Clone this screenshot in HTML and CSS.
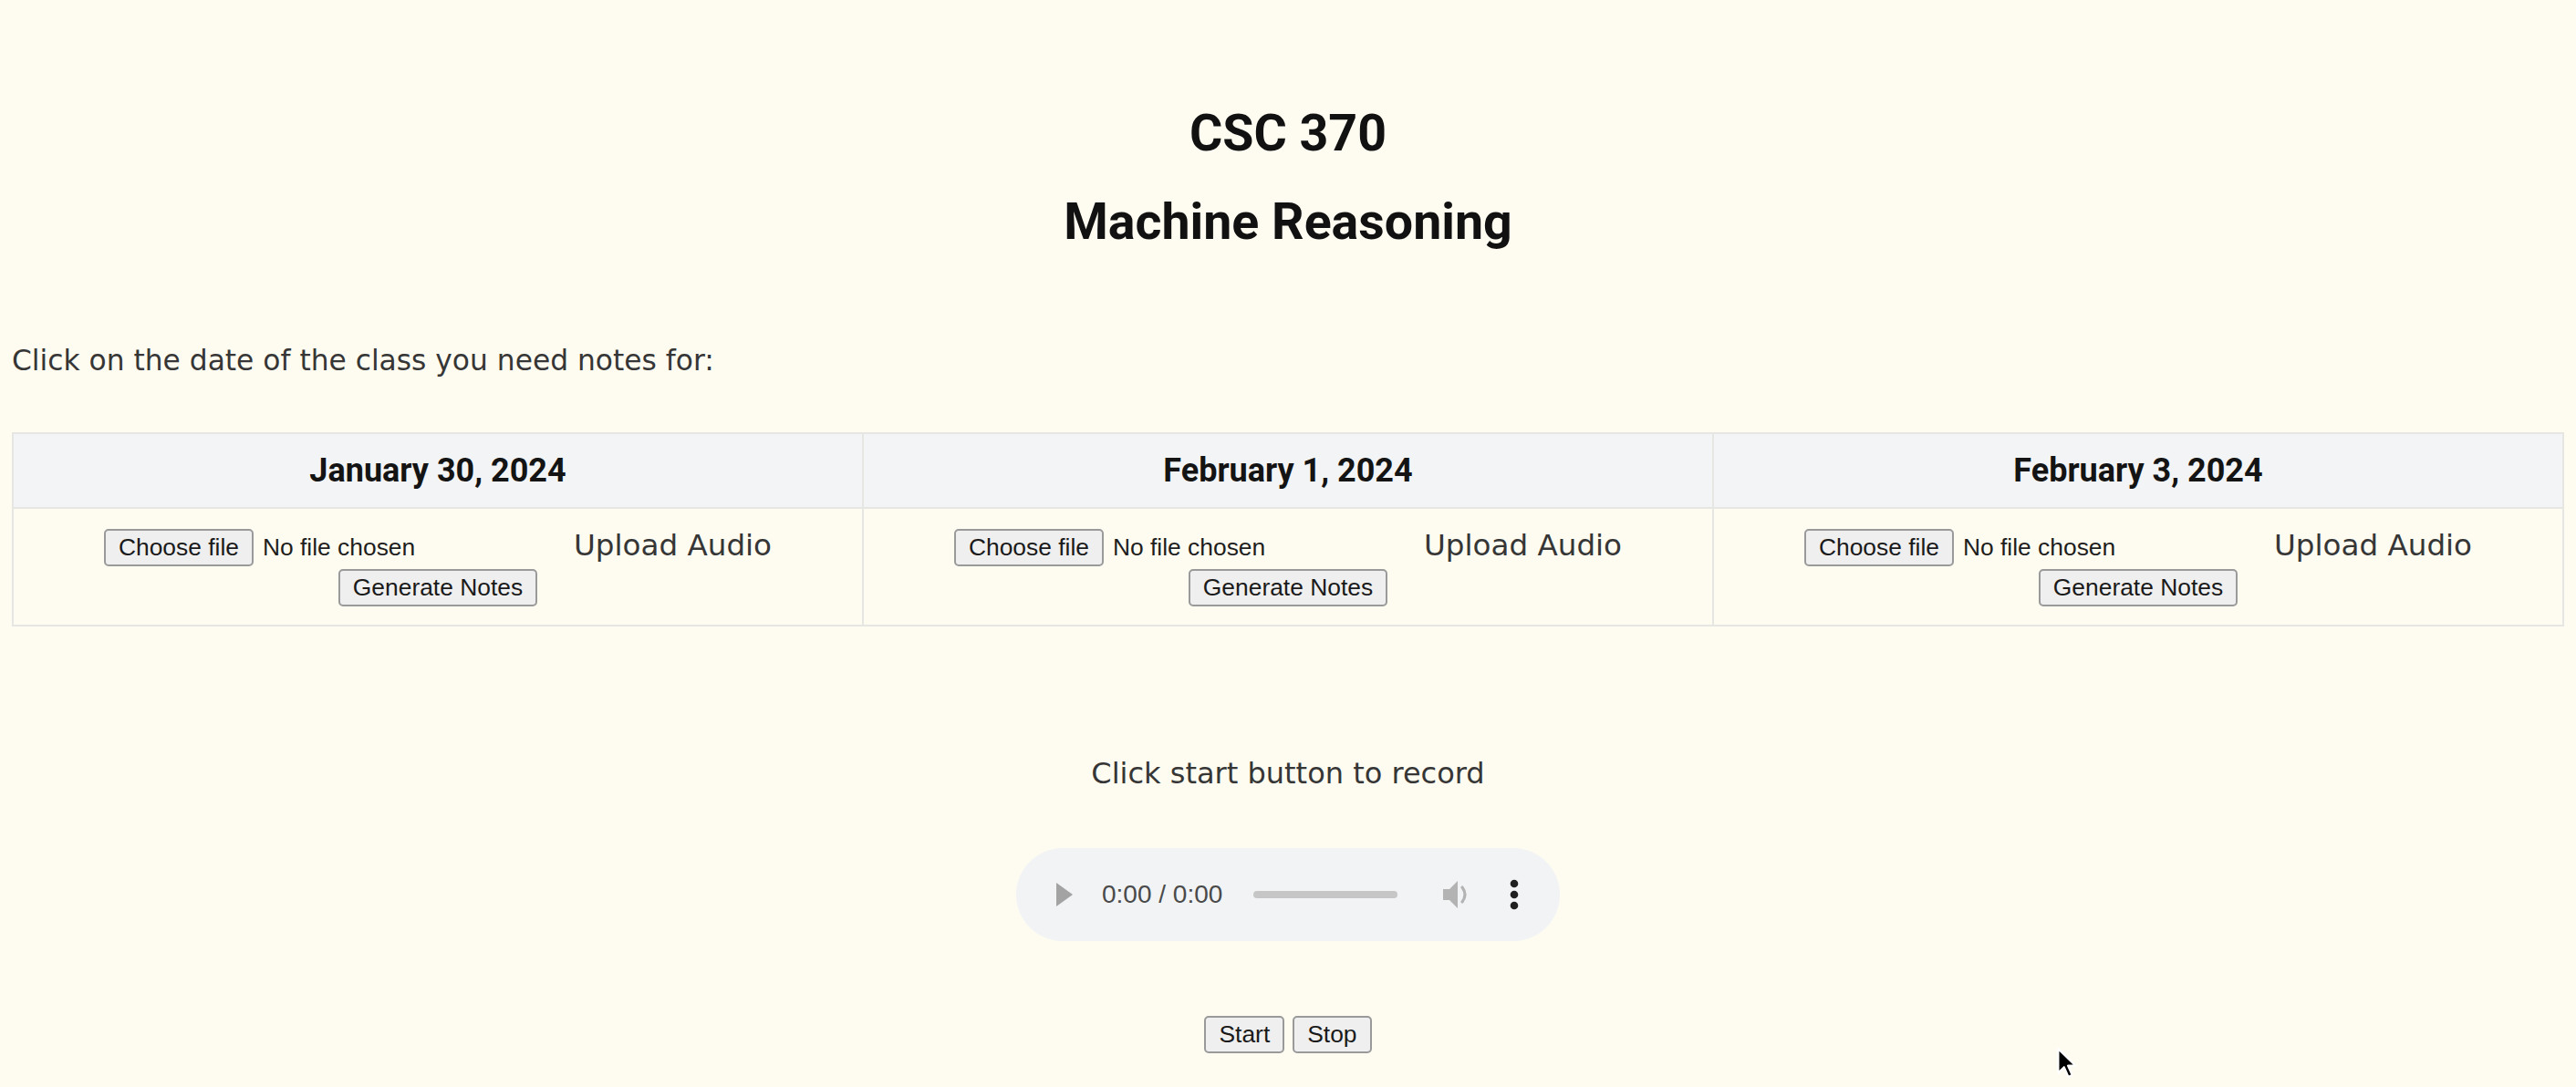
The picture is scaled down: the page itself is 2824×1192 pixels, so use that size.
FILE: index.html
```html
<!DOCTYPE html>
<html lang="en">
<head>
<meta charset="utf-8">
<title>CSC 370 - Machine Reasoning</title>
<link rel="stylesheet" href="styles.css">
</head>
<body>
<div class="page">
  <h1 class="title">CSC 370</h1>
  <h2 class="title sub">Machine Reasoning</h2>
  <p class="intro">Click on the date of the class you need notes for:</p>
  <table class="classes">
    <thead>
      <tr>
        <th>January 30, 2024</th>
        <th>February 1, 2024</th>
        <th>February 3, 2024</th>
      </tr>
    </thead>
    <tbody>
      <tr>
        <td>
          <div class="cell">
            <div class="upload-row">
              <span class="file"><span class="btn">Choose file</span><span class="file-name">No file chosen</span></span>
              <span class="upload-label">Upload Audio</span>
            </div>
            <span class="btn">Generate Notes</span>
          </div>
        </td>
        <td>
          <div class="cell">
            <div class="upload-row">
              <span class="file"><span class="btn">Choose file</span><span class="file-name">No file chosen</span></span>
              <span class="upload-label">Upload Audio</span>
            </div>
            <span class="btn">Generate Notes</span>
          </div>
        </td>
        <td>
          <div class="cell">
            <div class="upload-row">
              <span class="file"><span class="btn">Choose file</span><span class="file-name">No file chosen</span></span>
              <span class="upload-label">Upload Audio</span>
            </div>
            <span class="btn">Generate Notes</span>
          </div>
        </td>
      </tr>
    </tbody>
  </table>

  <p class="record-hint">Click start button to record</p>

  <div class="player-wrap">
    <div class="player">
      <svg class="play" width="18" height="26" viewBox="0 0 18 26"><polygon points="0,0 18,13 0,26" fill="#a3a3a3"/></svg>
      <span class="time">0:00 / 0:00</span>
      <span class="track"></span>
      <svg class="volume" width="32" height="36" viewBox="0 0 32 36"><path d="M1 12 H8 L17 3 V33 L8 24 H1 Z" fill="#b3b3b3"/><path d="M22 10 Q28 18 22 26" fill="none" stroke="#b3b3b3" stroke-width="3.2" stroke-linecap="round"/></svg>
      <svg class="menu" width="10" height="34" viewBox="0 0 10 34"><circle cx="5" cy="5" r="4.3" fill="#202020"/><circle cx="5" cy="17" r="4.3" fill="#202020"/><circle cx="5" cy="29" r="4.3" fill="#202020"/></svg>
    </div>
  </div>

  <div class="controls">
    <span class="btn">Start</span>
    <span class="btn">Stop</span>
  </div>
</div>
<svg class="cursor" width="26" height="36" viewBox="0 0 24 34"><path d="M2 2 L2 27 L8 21 L12.5 31 L16.5 29.3 L12 19.5 L20 19.5 Z" fill="#000" stroke="#fff" stroke-width="2" stroke-linejoin="round"/></svg>
</body>
</html>
```
FILE: styles.css
```css
html, body {
  margin: 0;
  padding: 0;
  background: #fefcf1;
}

body {
  font-family: "DejaVu Sans", "Open Sans", sans-serif;
  color: #363636;
  position: relative;
  min-height: 1192px;
  overflow: hidden;
}

.page {
  padding: 0 13px;
}

.title {
  font-family: Roboto, "Liberation Sans", sans-serif;
  font-weight: 700;
  font-size: 55.5px;
  line-height: 66px;
  color: #111;
  text-align: center;
  margin: 114px 0 0;
}

.title.sub {
  margin-top: 31px;
}

.intro {
  font-size: 31.3px;
  line-height: 40px;
  margin: 98px 0 0;
}

.classes {
  margin-top: 59px;
  width: 100%;
  table-layout: fixed;
  border-collapse: collapse;
  border: 2px solid #e6e6e3;
}

.classes th {
  font-family: Roboto, "Liberation Sans", sans-serif;
  font-weight: 700;
  font-size: 36px;
  line-height: 44px;
  color: #141414;
  background: #f3f4f5;
  border: 2px solid #e6e6e3;
  padding: 18px 10px;
}

.classes td {
  border: 2px solid #e6e6e3;
  padding: 21px 10px 20px;
}

.cell {
  display: flex;
  flex-direction: column;
  align-items: center;
  gap: 3px;
}

.upload-row {
  display: flex;
  align-items: baseline;
  gap: 8px;
}

.file {
  display: inline-flex;
  align-items: baseline;
  gap: 10px;
  width: 507px;
}

.file-name {
  font-family: "Liberation Sans", Arial, sans-serif;
  font-size: 26.4px;
  color: #1e1e1e;
}

.upload-label {
  font-size: 32.6px;
  color: #363636;
}

.btn {
  display: inline-block;
  font-family: "Liberation Sans", Arial, sans-serif;
  font-size: 26.4px;
  line-height: 30px;
  color: #1a1a1a;
  background: #efefef;
  border: 2px solid #9a9a9a;
  border-radius: 5px;
  padding: 3.5px 14px;
  white-space: nowrap;
}

.record-hint {
  text-align: center;
  font-size: 32px;
  line-height: 40px;
  margin: 141px 0 0;
}

.player-wrap {
  display: flex;
  justify-content: center;
  margin-top: 62px;
}

.player {
  width: 596px;
  height: 102px;
  box-sizing: border-box;
  border-radius: 51px;
  background: #f1f3f5;
  display: flex;
  align-items: center;
  padding-left: 44px;
}

.time {
  font-family: "Liberation Sans", Arial, sans-serif;
  font-size: 28px;
  color: #4a4a4a;
  margin-left: 32px;
}

.track {
  width: 158px;
  height: 8px;
  border-radius: 4px;
  background: #c6c6c6;
  margin-left: 34px;
}

.volume {
  margin-left: 49px;
}

.menu {
  margin-left: 42px;
}

.controls {
  display: flex;
  justify-content: center;
  gap: 9px;
  margin-top: 82px;
}

.cursor {
  position: absolute;
  left: 2254px;
  top: 1148px;
}
```
